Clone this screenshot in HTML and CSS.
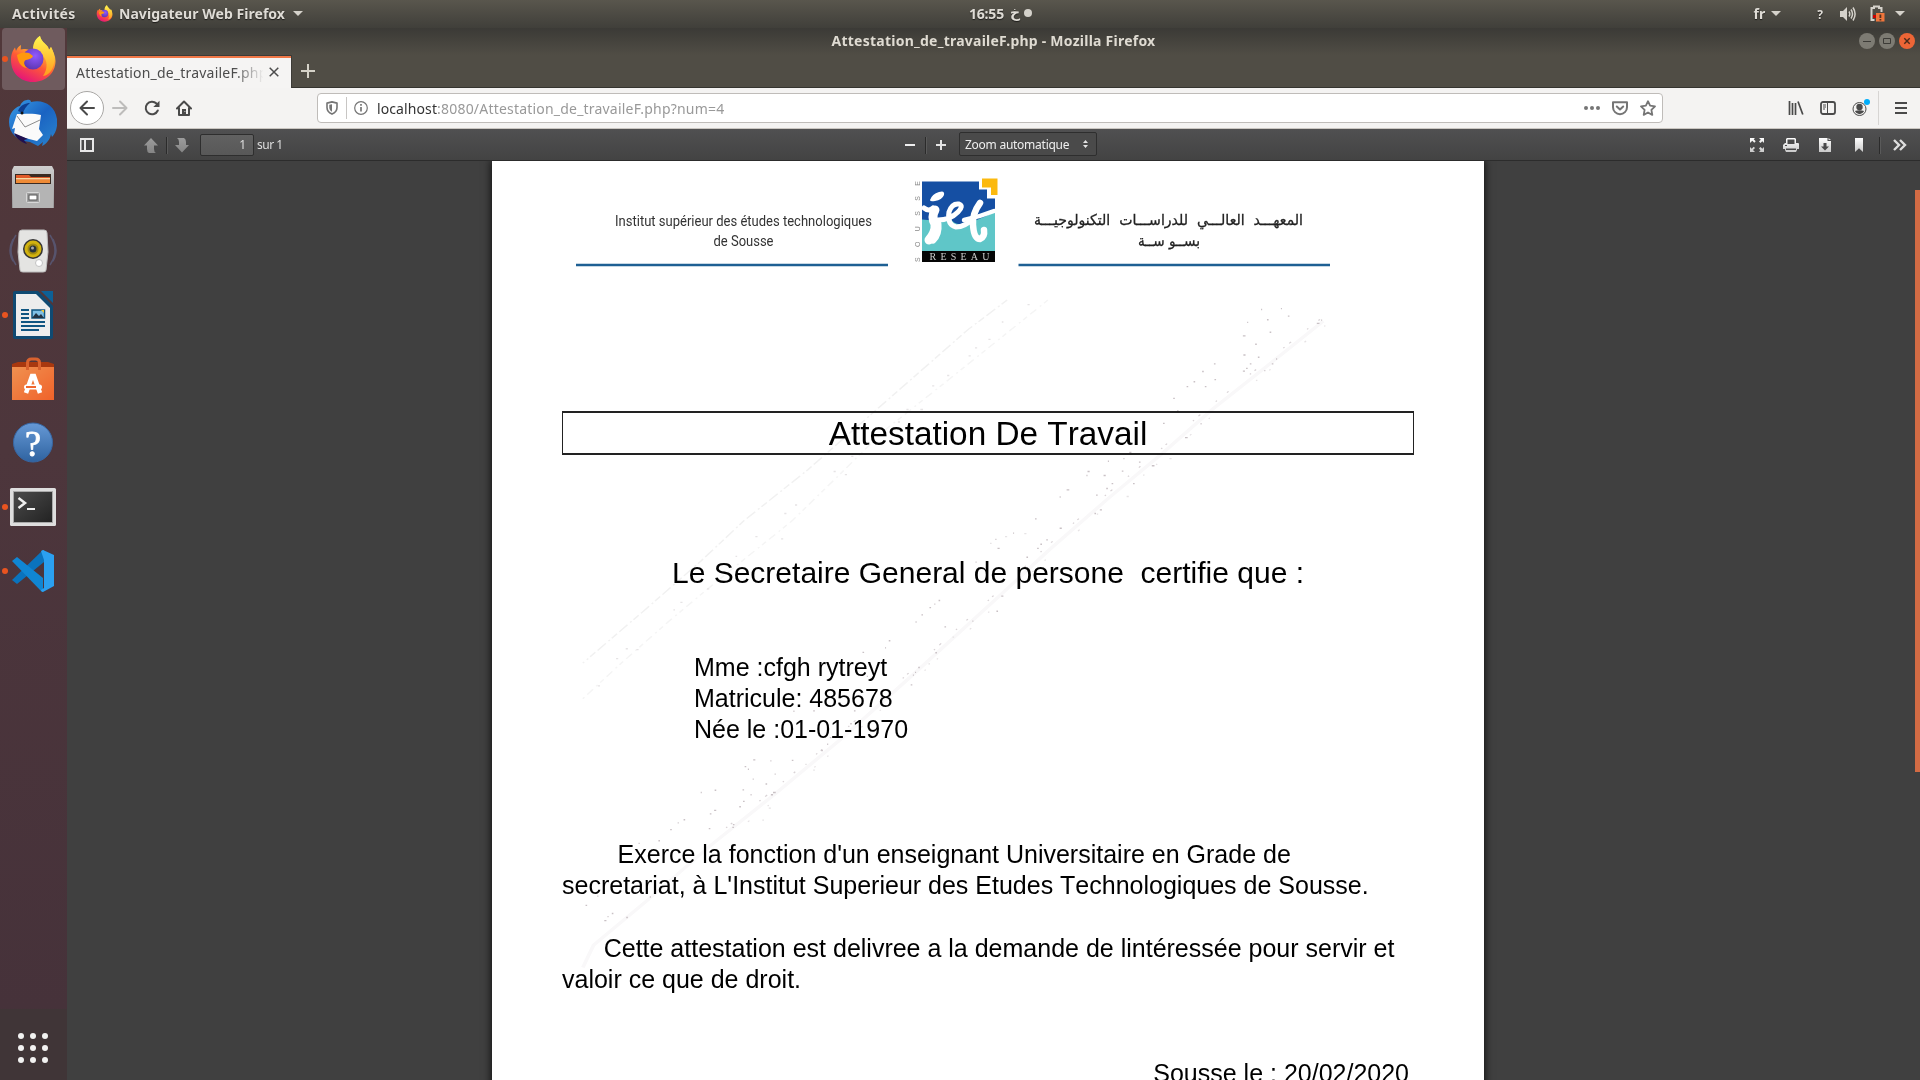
FILE: index.html
```html
<!DOCTYPE html>
<html lang="fr">
<head>
<meta charset="utf-8">
<title>Attestation_de_travaileF.php - Mozilla Firefox</title>
<link rel="stylesheet" href="styles.css">
</head>
<body>
<svg width="0" height="0" class="defs">
  <defs>
    <linearGradient id="fxBody" x1="0.8" y1="0" x2="0.3" y2="1"><stop offset="0" stop-color="#fff44f"/><stop offset=".35" stop-color="#ffb02e"/><stop offset=".6" stop-color="#ff5a36"/><stop offset="1" stop-color="#e3127c"/></linearGradient>
    <linearGradient id="fxTail" x1="0" y1="0" x2="0" y2="1"><stop offset="0" stop-color="#fff64f"/><stop offset="1" stop-color="#ff9a1f"/></linearGradient>
    <radialGradient id="fxGlobe" cx=".6" cy=".35" r=".7"><stop offset="0" stop-color="#9059ff"/><stop offset="1" stop-color="#5b35ae"/></radialGradient>
    <linearGradient id="tbBird" x1="0" y1="0" x2="1" y2="1"><stop offset="0" stop-color="#3a9fe8"/><stop offset=".5" stop-color="#1a63c2"/><stop offset="1" stop-color="#2b86cf"/></linearGradient>
    <linearGradient id="steel" x1="0" y1="0" x2="0" y2="1"><stop offset="0" stop-color="#cfcfcf"/><stop offset="1" stop-color="#989898"/></linearGradient>
    <linearGradient id="bag" x1="0" y1="0" x2="1" y2="1"><stop offset="0" stop-color="#f09150"/><stop offset="1" stop-color="#f0622a"/></linearGradient>
    <linearGradient id="help" x1="0" y1="0" x2="0" y2="1"><stop offset="0" stop-color="#6699d6"/><stop offset="1" stop-color="#2f63a0"/></linearGradient>
    <linearGradient id="screen" x1="0" y1="0" x2="1" y2="1"><stop offset="0" stop-color="#4b4b4b"/><stop offset="1" stop-color="#222"/></linearGradient>
    <linearGradient id="light" x1="0" y1="0" x2="0" y2="1"><stop offset="0" stop-color="#fff"/><stop offset="1" stop-color="#c9c9c9"/></linearGradient>
    <linearGradient id="mid" x1="0" y1="0" x2="0" y2="1"><stop offset="0" stop-color="#9c9c9c"/><stop offset="1" stop-color="#858585"/></linearGradient>
    <symbol id="firefox" viewBox="0 0 48 48">
      <path fill="url(#fxBody)" d="M24 47C11 47 2 37.500 2 25c0-6 2-10 4-12.500L7 16c1-3 3-5 5-6l-.3 4.500C14 13.500 18 14 20 15l6-1C24 7 29 2 31 1c1 5 4 7 8 11l1 3 2-3c2 4 4.500 9 4.500 14C46.500 38 37 47 24 47z"/>
      <path fill="url(#fxTail)" d="M31 1c1 5 5 7 8 11l1 3 2-3c3 6 5 12 2 20-2 6-7 9-10 9 5-7 5-16-1-21-3-3-7-4-9-6 0-6 3-11 7-13z"/>
      <circle cx="24" cy="24" r="10.500" fill="url(#fxGlobe)"/>
      <path fill="#ff980e" d="M8 20c4-3 9-3 12-2l4 3c-1 3-4 3-7 4-3 1-2 6 1 8-7-1-9-7-10-13z"/>
    </symbol>
  </defs>
</svg>

<header class="topbar">
  <div class="top-left">
    <span class="t-act">Activités</span>
    <svg class="fx-mini"><use href="#firefox"/></svg>
    <span class="t-app">Navigateur Web Firefox</span>
    <i class="caret"></i>
  </div>
  <div class="clock"><span class="time">16:55</span><span class="day">خ</span><i class="dot"></i></div>
  <div class="top-right">
    <span class="t-lang">fr</span><i class="caret"></i>
    <span class="t-q">?</span>
    <svg class="vol" width="16" height="16" viewBox="0 0 16 16"><path fill="#d5d2cb" d="M0 5h3l4-4v14l-4-4H0z"/><path fill="none" stroke="#d5d2cb" stroke-width="1.500" d="M9 5.500q1.600 2.500 0 5M11 3.500q3 4.500 0 9M13 1.500q4.200 6.500 0 13"/></svg>
    <svg class="bat" width="15" height="17" viewBox="0 0 15 17"><path fill="none" stroke="#d5d2cb" stroke-width="2" d="M4.500 15H1.500V3H4V1.500h5V3h2.500v4"/><path fill="#c00" d="M3 10h3v3H3z"/><path fill="#f0763c" d="M6 8h8.500v8.500H6z"/><path fill="#54301c" d="M9.500 9.500h1.800v3.500H9.500zM9.500 14h1.800v1.500H9.500z"/></svg>
    <i class="caret"></i>
  </div>
</header>

<div class="desktop">
  <nav class="dock">
    <div class="app active running"><svg width="48" height="48"><use href="#firefox"/></svg></div>
    <div class="app"><svg width="48" height="48" viewBox="0 0 48 48">
      <path fill="url(#tbBird)" d="M18 1c3-1 4 1 4 2 12-3 24 3 26 17 1 9-2 15-5 18l-1-3c-1 6-5 10-9 12l1-4-5 4-8-4C8 42 0 34 0 23 0 14 6 8 11 7c1-3 4-6 7-6z"/>
      <path fill="#0f3f91" d="M9 12c2-6 8-8 12-8-4 3-6 7-7 10z"/>
      <path fill="#fafafa" d="M8 15c7 0 17-1 24 1l-2 14 4 6-6 6C20 40 12 38 5 35l1-6-3 1z"/>
      <path fill="none" stroke="#8c8c8c" d="M8 17l8 11 15-7"/>
      <path fill="#20104f" d="M5 34l14 6-4 1 3 4c-6-2-11-6-13-11z"/><circle cx="13" cy="14" r="1.500" fill="#111"/>
    </svg></div>
    <div class="app"><svg width="48" height="48" viewBox="0 0 48 48">
      <path fill="url(#steel)" d="M5 3h38l2 4v38H3V7z"/><path fill="#3a2a22" d="M6 11h36v10H6z"/><path fill="#e05a2a" d="M7 12h13l2 2h19v6H7z"/><path fill="#f5d9a0" d="M7 15h34v1.500H7z"/><path fill="#ee8a35" d="M7 17h34v3H7z"/>
      <path fill="#b4b4b4" d="M4 21h40v24H4z"/><rect x="17.500" y="29.500" width="13" height="10" rx="1" fill="#a0a0a0" stroke="#d8d8d8"/><rect x="20" y="32" width="8" height="5" fill="#fff" stroke="#555"/>
    </svg></div>
    <div class="app"><svg width="48" height="48" viewBox="0 0 48 48">
      <path fill="none" stroke="#5d688f" stroke-width="1.500" opacity=".6" d="M7 8q-10 16 0 30M4 12q-6 12 0 22M41 8q10 16 0 30M44 12q6 12 0 22"/>
      <path fill="#e4e4e2" stroke="#bdbdbd" d="M13 3h22q3 0 3 3l1 19-2 18q0 2-3 2H14q-3 0-3-2L9 25l1-19q0-3 3-3z"/>
      <circle cx="24" cy="22" r="10" fill="#353535"/><circle cx="24" cy="22" r="8.500" fill="#d1b20f"/><circle cx="24" cy="22" r="5.500" fill="#a18a10"/><circle cx="24" cy="22" r="3.500" fill="#27323b"/><circle cx="23.500" cy="21" r="1.500" fill="#aaa"/><circle cx="30" cy="36" r="3.500" fill="#fff" stroke="#c2c2c2"/>
    </svg></div>
    <div class="app running"><svg width="48" height="48" viewBox="0 0 48 48">
      <path fill="#0f4a72" d="M6 0h23l15 15v31q0 2-2 2H6q-2 0-2-2V2q0-2 2-2z"/><path fill="#0d6096" d="M32 0h12v12z"/><path fill="#ededed" d="M7 3h20l14 14v28H7z"/>
      <path stroke="#105581" stroke-width="2" d="M12 19h8M12 23h8M12 27h8M12 31h24M12 35h24M12 39h18"/><path fill="#7fc0e6" stroke="#105581" stroke-width="1.500" d="M23 19h12.500v8H23z"/><path fill="#234" d="M23 27l4-5 3 3 2-2 3 4z"/><path fill="#f3c530" d="M32 19h3v3z"/>
    </svg></div>
    <div class="app"><svg width="48" height="48" viewBox="0 0 48 48">
      <path fill="#a8380f" d="M3 9l6-2h30l6 2v5H3z"/><path fill="url(#bag)" d="M3 12h42v33H3z"/><path fill="none" stroke="#d9622f" stroke-width="3" d="M18.500 15V8q0-4 4-4h4q4 0 4 4v7"/>
      <path fill="none" stroke="#fff" stroke-width="4.500" d="M17 38l6-17h2l6 17"/><path stroke="#fff" stroke-width="5" stroke-linecap="round" d="M17.500 32h13"/><path stroke="#f0672e" stroke-width="2" d="M17 32h10"/>
    </svg></div>
    <div class="app"><svg width="48" height="48" viewBox="0 0 48 48"><circle cx="24" cy="23.500" r="19.500" fill="url(#help)" stroke="#3767a4"/><text x="24" y="37" text-anchor="middle" class="qmark">?</text></svg></div>
    <div class="app running"><svg width="48" height="48" viewBox="0 0 48 48"><rect x="1" y="5" width="46" height="38" rx="1.500" fill="#dedede"/><rect x="4.500" y="8.500" width="39" height="31" fill="url(#screen)" stroke="#a9a9a9"/><path fill="none" stroke="#eee" stroke-width="2.500" d="M9.500 15l6.500 5-6.500 5"/><path stroke="#eee" stroke-width="2" d="M18 26h8"/></svg></div>
    <div class="app running"><svg width="48" height="48" viewBox="0 0 48 48"><path fill="#0a73bd" d="M3 33l5 4 27-22V3l-1 0z"/><path fill="#1086d3" d="M3 14l5-4 26 21v14l-2-1z"/><path fill="#2ba0f0" d="M34 3l11 5v31l-11 6c-1 0-2-1-2-2l3-2V13l-3-9z"/></svg></div>
    <svg class="grid" width="32" height="32" viewBox="0 0 32 32" fill="#f2f2f1"><circle cx="4" cy="4" r="3"/><circle cx="16" cy="4" r="3"/><circle cx="28" cy="4" r="3"/><circle cx="4" cy="16" r="3"/><circle cx="16" cy="16" r="3"/><circle cx="28" cy="16" r="3"/><circle cx="4" cy="28" r="3"/><circle cx="16" cy="28" r="3"/><circle cx="28" cy="28" r="3"/></svg>
  </nav>

  <main class="window">
    <div class="titlebar">
      <span class="win-title">Attestation_de_travaileF.php - Mozilla Firefox</span>
      <div class="controls">
        <svg width="16" height="16" viewBox="0 0 16 16"><circle cx="8" cy="8" r="8" fill="#7d7b73"/><path stroke="#3c3b37" d="M4 8.500h8"/></svg>
        <svg width="16" height="16" viewBox="0 0 16 16"><circle cx="8" cy="8" r="8" fill="#7d7b73"/><path fill="none" stroke="#3c3b37" d="M4.500 5.500h7v5h-7z"/></svg>
        <svg width="16" height="16" viewBox="0 0 16 16"><circle cx="8" cy="8" r="8" fill="#ed6536"/><path stroke="#4a2a1a" stroke-width="1.400" d="M5.300 5.300l5.400 5.400M10.700 5.300l-5.400 5.400"/></svg>
      </div>
    </div>
    <div class="tabs">
      <div class="tab"><span class="tab-title">Attestation_de_travaileF.php</span><svg width="10" height="10" viewBox="0 0 10 10"><path stroke="#4c4c4c" stroke-width="1.500" d="M.7.7l8.600 8.600M9.300.7L.7 9.300"/></svg></div>
      <svg class="newtab" width="14" height="14" viewBox="0 0 14 14"><path stroke="#d5d2c8" stroke-width="2" d="M7 0v14M0 7h14"/></svg>
    </div>
    <div class="navbar">
      <div class="back"><svg width="16" height="16" viewBox="0 0 16 16"><path fill="none" stroke="#4a4a4a" stroke-width="2" stroke-linecap="round" stroke-linejoin="round" d="M8 1.500L1.500 8 8 14.500M2 8h13"/></svg></div>
      <div class="navicons">
        <svg width="16" height="16" viewBox="0 0 16 16"><path fill="none" stroke="#bdbcbb" stroke-width="2" stroke-linecap="round" stroke-linejoin="round" d="M8 1.500L14.500 8 8 14.500M14 8H1"/></svg>
        <svg width="16" height="16" viewBox="0 0 16 16"><path fill="none" stroke="#4a4a4a" stroke-width="2" stroke-linecap="round" d="M13.800 10.500A6.300 6.300 0 1 1 12.500 3.500"/><path fill="#4a4a4a" d="M15.500.8V7H9.300z"/></svg>
        <svg width="16" height="16" viewBox="0 0 16 16"><path fill="none" stroke="#4a4a4a" stroke-width="2" stroke-linejoin="round" stroke-linecap="round" d="M1 8.500L8 1.500l7 7M3 8v7h10V8"/><path fill="#4a4a4a" d="M6 9h4v5H6z"/><path fill="#eee" d="M8.500 11h.8v1h-.8z"/></svg>
      </div>
      <div class="urlbar">
        <svg width="12" height="14" viewBox="0 0 12 14"><path fill="none" stroke="#757575" stroke-width="1.600" stroke-linejoin="round" d="M6 .9l5 1.200v4.400c0 3-2 5.300-5 6.600-3-1.300-5-3.600-5-6.600V2.100z"/><path fill="#757575" d="M6 3.200v7.600C4.300 9.700 3.300 8.300 3.300 6.500V3.800z"/></svg>
        <i class="ubsep"></i>
        <svg width="14" height="14" viewBox="0 0 14 14"><circle cx="7" cy="7" r="6.300" fill="none" stroke="#757575" stroke-width="1.200"/><path stroke="#757575" stroke-width="1.700" d="M7 6v4.500M7 3v1.700"/></svg>
        <span class="url"><b>localhost</b>:8080/Attestation_de_travaileF.php?num=4</span>
        <div class="ubicons">
          <svg width="16" height="16" viewBox="0 0 16 16" fill="#757575"><circle cx="2" cy="8" r="2"/><circle cx="8" cy="8" r="2"/><circle cx="14" cy="8" r="2"/></svg>
          <svg width="16" height="16" viewBox="0 0 16 16"><path fill="none" stroke="#757575" stroke-width="2" stroke-linejoin="round" d="M1 2.200h14v5a7 7 0 0 1-14 0z"/><path fill="none" stroke="#757575" stroke-width="2" stroke-linecap="round" stroke-linejoin="round" d="M4.800 6.500L8 9.500l3.200-3"/></svg>
          <svg width="16" height="16" viewBox="0 0 16 16"><path fill="none" stroke="#757575" stroke-width="1.800" stroke-linejoin="round" d="M8 1.200l2.100 4.500 4.900.7-3.600 3.500.9 5L8 12.500l-4.300 2.400.9-5L1 6.400l4.900-.7z"/></svg>
        </div>
      </div>
      <div class="rightnav">
        <svg width="16" height="16" viewBox="0 0 16 16"><path stroke="#4a4a4a" stroke-width="1.700" d="M1.500 1v14M4.500 3v12M7.500 3v12M10 1.500l4.800 13"/></svg>
        <svg width="16" height="16" viewBox="0 0 16 16"><rect x="1" y="2" width="14" height="12" rx="2" fill="none" stroke="#4a4a4a" stroke-width="1.800"/><path stroke="#4a4a4a" d="M7.500 2v12M3 5h3M3 7h3M3 9h2"/></svg>
        <svg width="18" height="18" viewBox="0 0 18 18"><circle cx="7.500" cy="10" r="6.500" fill="none" stroke="#4a4a4a"/><circle cx="7.500" cy="8" r="3.200" fill="#4a4a4a"/><path fill="#4a4a4a" d="M2.800 12q4.700-1.500 9.400 0-1.500 3-4.700 3.300Q4.300 15 2.800 12z"/><circle cx="15" cy="3" r="3" fill="#00adfa"/></svg>
        <i class="navsep"></i>
        <svg class="menu" width="12" height="12" viewBox="0 0 12 12"><path stroke="#4a4a4a" stroke-width="2" d="M0 1h12M0 6h12M0 11h12"/></svg>
      </div>
    </div>

    <div class="pdfbar">
      <div class="pdf-left">
        <svg class="side" width="14" height="14" viewBox="0 0 14 14"><path fill="#e8e8e8" fill-rule="evenodd" d="M0 0h14v14H0zM1.500 2v10H4V2zM6 2v10h6V2z"/></svg>
        <svg class="up" width="14" height="15" viewBox="0 0 14 15"><path fill="url(#mid)" d="M7 0l7 7.500H10V11q0 3 2 4H5q-2-1-2-4V7.500H0z"/></svg>
        <i class="psep"></i>
        <svg width="14" height="15" viewBox="0 0 14 15"><path fill="url(#mid)" d="M7 14.500L0 7h4V4q0-3-2-4h7q2 1 2 4v3h3z"/></svg>
        <span class="pageno">1</span><span class="of">sur 1</span>
      </div>
      <div class="pdf-mid">
        <svg width="10" height="10" viewBox="0 0 10 10"><path stroke="#eee" stroke-width="2" d="M0 5h10"/></svg>
        <i class="psep"></i>
        <svg width="10" height="10" viewBox="0 0 10 10"><path stroke="#e4e4e4" stroke-width="2" d="M0 5h10M5 0v10"/></svg>
        <div class="select"><span>Zoom automatique</span><svg width="5" height="8" viewBox="0 0 5 8"><path fill="#e4e4e4" d="M2.500 0L5 3H0zM2.500 8L5 5H0z"/></svg></div>
      </div>
      <div class="pdf-right">
        <svg width="14" height="14" viewBox="0 0 14 14"><path fill="url(#light)" d="M0 0h5L3.700 1.300l2 2-1.400 1.400-2-2L0 5zM14 0v5l-1.700-1.700-1.800 1.800L9 3.600l1.800-1.800L9 0zM0 14V9l1.700 1.700 2-2L5 10.100l-2 2L5 14zM14 14H9l1.500-1.700L9 10.500 10.500 9l1.800 1.800L14 9z"/></svg>
        <svg width="16" height="14" viewBox="0 0 16 14"><path fill="url(#light)" fill-rule="evenodd" d="M4 0h8l1 1v4h2q1 0 1 1v4.500q0 .5-.5.500H14v1l-1 2H3l-1-2v-1H.5Q0 11 0 10.500V7l2-2h1V1zM4.500 1.500V6h7V1.500zM3 10.500h10V12H3zM2 7v1h2V7z"/></svg>
        <svg width="12" height="14" viewBox="0 0 12 14"><path fill="url(#light)" fill-rule="evenodd" d="M0 0h8.500v3H12v11H0zM4.500 5v3.500H2l4 4 4-4H7.500V5z"/><path fill="#ddd" d="M9.500 0L12 2H9.500z"/></svg>
        <svg width="8" height="14" viewBox="0 0 8 14"><path fill="url(#light)" d="M0 0h8v14L4 10.300 0 14z"/></svg>
        <i class="psep"></i>
        <svg width="14" height="12" viewBox="0 0 14 12"><path fill="none" stroke="#dedede" stroke-width="2.400" d="M1 1l5 5-5 5M7 1l5 5-5 5"/></svg>
      </div>
    </div>

    <section class="viewer">
      <article class="page">
        <svg class="letterhead" width="780" height="100" viewBox="560 170 780 100">
          <g class="lh-fr"><text x="615" y="226" textLength="257" lengthAdjust="spacingAndGlyphs">Institut supérieur des études technologiques</text><text x="713.500" y="245.500" textLength="60" lengthAdjust="spacingAndGlyphs">de Sousse</text></g>
          <path stroke="#1e6094" stroke-width="2.400" d="M576 265h312M1018.500 265H1330"/>
          <text class="lh-side" transform="translate(919.500 262) rotate(-90)" textLength="81">SOUSSE</text>
          <path fill="#5fc6c8" d="M922 205h73v47h-73z"/>
          <path fill="#154fa3" d="M922 181.500h57v8h8v9h8v13l-10 5-12 5-14 3-14-3-23-2z"/>
          <path fill="#5fc6c8" d="M942 222q6-3 9-3 3 6 11 5l10-3-1 12-30 5z"/>
          <path fill="#fbb90f" d="M982 178.500h15.500v16.500H991v-7.500h-9z"/>
          <path fill="#050505" d="M922 251h73v11h-73z"/>
          <path fill="#fff" d="M930 200q2-6 9-8 6-2 5 3-2 5-9 6-5 1-5-1z"/>
          <g fill="none" stroke="#fff" stroke-linecap="round" stroke-linejoin="round">
            <path stroke-width="5" d="M924 208q5 4 9 0"/>
            <path stroke-width="9" d="M935 210q-4 7 0 14 1 8-6 16"/>
            <path stroke-width="7" d="M933 240q6-6 5-16"/>
            <path stroke-width="5" d="M938 220q12 0 20-8 6-6 1-8-7-1-10 8-2 13 7 15 9 0 18-9"/>
            <path stroke-width="6.500" d="M980 203q-8 11-7 22 1 14 7 14 5-2 4-9"/>
            <path stroke-width="4.500" d="M964 220q15-3 30-9"/>
          </g>
          <text class="lh-reseau" x="929.500" y="260" textLength="60">RESEAU</text>
          <g class="lh-ar" direction="rtl"><text x="1303" y="225" textLength="269" lengthAdjust="spacingAndGlyphs">المعهـــد&#160; العالـــي&#160; للدراســـات&#160; التكنولوجيـــة</text><text x="1200" y="245.500" textLength="62" lengthAdjust="spacingAndGlyphs">بســو ســة</text></g>
        </svg>
        <h1>Attestation De Travail</h1>
        <p class="intro">Le Secretaire General de persone  certifie que :</p>
        <p class="ident">Mme :cfgh rytreyt
Matricule: 485678
Née le :01-01-1970</p>
        <p class="body first">        Exerce la fonction d'un enseignant Universitaire en Grade de
secretariat, à L'Institut Superieur des Etudes Technologiques de Sousse.</p>
        <p class="body second">      Cette attestation est delivree a la demande de lintéressée pour servir et
valoir ce que de droit.</p>
        <p class="date">Sousse le : 20/02/2020</p>
        <svg class="scratches" width="840" height="700" viewBox="0 0 1568 1568" preserveAspectRatio="none" fill="none">
          <path stroke="#f9f8f9" stroke-width="7" d="M1462 92L1360 190 1255 290 1160 390 1060 490 950 605 860 705 700 880 560 1030 440 1150 320 1265 200 1390 100 1490 80 1540"/>
          <path stroke="#d9d3d6" stroke-width="2.500" stroke-dasharray="4 26 3 41 5 12 3 70 4 9 3 55" d="M1456 88L1354 184 1249 284 1154 384 1054 484 944 599 854 699 694 874 554 1024 434 1144 314 1259"/>
          <path stroke="#e6e2e4" stroke-width="2.500" stroke-dasharray="3 47 4 88 3 31 3 120" d="M1466 102L1364 200 1259 300 1164 400 1064 500 954 615 864 715 704 890 564 1040 444 1160 324 1275"/>
          <path stroke="#f1f1f1" stroke-width="3" stroke-dasharray="14 5 4 7 22 6" d="M872 45L800 110 700 215 600 320 500 425 380 540 300 630 190 745 80 858"/>
          <path stroke="#f5f5f5" stroke-width="3" stroke-dasharray="10 7 4 9 16 8" d="M948 45L860 130 740 245 640 340 560 435 470 540 330 675 240 765 150 860 80 938"/>
          <path stroke="#c9c1c5" stroke-width="3" d="M1346 66h2M1383 64h2M1396 81h3M1320 95h2M1357 89h3M1362 117h3M1312 125h5M1335 144h3M1313 168h4M1340 173h3M1325 188h3M1318 198h3M1312 204h4M1374 177h2M1366 188h3M1352 203h2M1450 97h5M1458 90h2M1258 188h3M1236 205h3M1259 223h3M1220 228h3M1207 239h3M1241 239h3M1182 265h3M1189 293h3M1163 321h3M1233 322h2M1204 353h5M1100 386h4M1089 400h2M1118 408h3M1142 416h5M1060 406h2M1022 429h4M1052 438h4M1086 428h3M1020 438h2M1067 456h3M1057 467h3M1107 456h3M983 470h5M970 486h2M1038 482h3M1045 515h4M1035 523h3M924 535h3M970 556h4M883 567h2M850 581h2M945 582h3M934 592h3M928 601h3M854 601h4M908 621h3M813 632h2M861 708h4M744 718h3M736 726h2M727 734h3M712 750h3M755 777h3M807 764h2M701 766h2M852 742h3M651 808h3M644 824h2M602 834h3M738 835h3M706 868h3M700 879h2M696 885h2M610 888h2M692 907h3M586 965h3M510 965h3M473 966h2M579 994h3M555 990h2M541 1025h3M536 1040h2M525 1054h3M398 1075h4M430 1077h2M470 1076h3M382 1090h3M388 1096h2M438 1107h2M397 1118h2M421 1129h3M435 1148h5M431 1153h4M326 1143h3M300 1148h2M378 1142h3M393 1153h2M379 1168h3M325 1188h4M317 1196h3M315 1229h3M372 1180h3M360 1220h3M359 1226h3M268 1209h3M257 1216h2M243 1231h3M184 1262h2M221 1256h3M206 1281h3M134 1419h3M126 1426h2M120 1435h4M161 1428h3M205 1382h2M85 1401h3M107 1380h2"/>
          <path stroke="#e6e4e5" stroke-width="3" d="M910 55h4M862 94h3M837 133h4M812 152h4M800 170h4M760 214h4M732 237h4M710 290h5M684 290h4M668 318h4M620 345h3M581 395h4M548 429h4M569 436h4M476 504h4M456 523h4M402 575h4M450 580h4M365 619h3M312 692h4M262 722h4M249 739h3M180 828h4M160 826h4M142 848h4M108 909h4M840 590h3M868 575h4M904 568h4M1095 485h4M1175 400h4M1160 390h3M725 860h3M770 800h3M495 1085h3M510 1098h3M415 1210h3M427 1183h4"/>
        </svg>
      </article>
      <i class="scrollthumb"></i>
    </section>
  </main>
</div>
</body>
</html>
```
FILE: styles.css
```css
* { box-sizing: border-box; }
body { margin: 0; width: 1920px; height: 1080px; overflow: hidden; background: #404040; font-family: "Noto Sans", "Open Sans", sans-serif; }
svg { display: block; flex: none; }
.defs { position: absolute; }
i { display: block; flex: none; }

/* GNOME top bar */
.topbar { height: 28px; display: grid; grid-template-columns: 1fr auto 1fr; align-items: start; background: linear-gradient(#59564d, #403f3a); color: #dfdcd6; font-size: 14px; font-weight: 700; line-height: 27px; text-shadow: 0 1px 1px rgba(0,0,0,.6); }
.top-left { display: flex; align-items: center; padding-left: 12px; height: 27px; }
.t-act { width: 64px; letter-spacing: .3px; white-space: nowrap; }
.t-app { width: 169px; letter-spacing: .05px; white-space: nowrap; }
.fx-mini { width: 17px; height: 17px; margin: 0 6px 0 20px; }
.caret { border: 5px solid transparent; border-top-color: #d5d2cb; border-bottom: 0; }
.t-app + .caret { margin-left: 5px; }
.clock { display: flex; align-items: center; height: 26px; padding-left: 81px; }
.time { width: 36px; letter-spacing: -.2px; }
.day { margin-left: 5px; font-family: "DejaVu Sans", sans-serif; width: 11px; }
.dot { width: 8px; height: 8px; border-radius: 50%; background: #d5d2cb; margin-left: 3px; }
.top-right { display: flex; align-items: center; justify-content: flex-end; height: 27px; padding-right: 15px; }
.t-lang { margin-right: 6px; }
.t-q { font-size: 12px; margin: 2px 17px 0 36px; }
.vol { margin-right: 14px; }
.bat { margin-right: 10px; }

.desktop { display: flex; height: 1052px; }

/* launcher */
.dock { width: 67px; flex: none; display: flex; flex-direction: column; align-items: center; background: linear-gradient(#51383a, #4d363c 40%, #46323a 93.200%, #403537 93.300%); position: relative; }
.app { width: 63px; height: 62px; margin-bottom: 2px; display: flex; align-items: center; justify-content: center; border-radius: 4px; padding: 0 2px 1px 0; position: relative; }
.active { background: #6f5b5e; }
.running::before { content: ""; position: absolute; left: 0; top: 28px; width: 6px; height: 6px; border-radius: 50%; background: #e95420; }
.qmark { font: 36px "Liberation Serif", serif; fill: #fff; stroke: #fff; stroke-width: .8px; }
.grid { margin: auto 0 16px; padding-right: 0; margin-right: 2px; }

/* browser chrome */
.window { flex: 1; display: flex; flex-direction: column; min-width: 0; }
.titlebar { height: 27px; background: linear-gradient(#3b3a36, #504d45); display: grid; grid-template-columns: 1fr auto 1fr; color: #dfdbd2; font-size: 14px; font-weight: 700; line-height: 25px; }
.win-title { grid-column: 2; letter-spacing: .24px; }
.controls { display: flex; gap: 4px; justify-content: flex-end; padding: 5px 5px 0 0; }
.tabs { height: 33px; background: #504d45; border-bottom: 1px solid #35342f; display: flex; }
.tab { width: 225px; height: 33px; border-top: 1px solid #3c3b37; border-right: 1px solid #3c3b37; background: linear-gradient(#f07746 2px, #f5f4f3 2px); display: flex; align-items: center; padding: 0 12px 0 9px; justify-content: space-between; color: #4c4c4c; font-size: 14px; letter-spacing: .2px; }
.tab-title { width: 187px; overflow: hidden; white-space: nowrap; -webkit-mask-image: linear-gradient(90deg, #000 158px, transparent 188px); mask-image: linear-gradient(90deg, #000 158px, transparent 188px); }
.newtab { margin: 9px 0 0 9px; }
.navbar { height: 41px; background: #f4f3f2; border-bottom: 1px solid #cac6c1; display: flex; align-items: center; padding-left: 3px; }
.back { width: 34px; height: 34px; border: 1px solid #a9a7a5; border-radius: 50%; background: #fff; display: flex; align-items: center; justify-content: center; }
.navicons { display: flex; gap: 16px; margin-left: 8px; width: 205px; }
.urlbar { width: 1346px; height: 30px; border: 1px solid #bfbcb9; border-radius: 4px; background: #fff; display: flex; align-items: center; padding: 0 6px 0 8px; }
.ubsep { width: 1px; height: 22px; background: #c8c6c4; margin: 0 7px 0 8px; }
.url { margin-left: 9px; font-size: 14px; letter-spacing: .2px; color: #999; white-space: nowrap; }
.url b { font-weight: 400; letter-spacing: .1px; color: #333; }
.ubicons { display: flex; gap: 12px; margin-left: auto; }
.rightnav { display: flex; align-items: center; margin-left: 125px; }
.rightnav svg + svg { margin-left: 16px; }
.navsep { width: 1px; height: 34px; background: #d7d5d3; margin-left: 8px; }
.rightnav .menu { margin-left: 16px; }

/* PDF toolbar */
.pdfbar { height: 32px; background: linear-gradient(#505051, #434343); border-bottom: 1px solid #2c2c2c; display: flex; align-items: flex-start; color: #dedede; font-size: 12px; position: relative; }
.pdf-left, .pdf-mid, .pdf-right { display: flex; align-items: center; height: 32px; }
.psep { width: 1px; height: 17px; background: #2b2b2b; box-shadow: 1px 0 #5a5a5a; }
.side { margin: 0 50px 0 13px; }
.up + .psep { margin: 0 8px; }
.pageno { width: 54px; height: 22px; margin: -1px 3px 0 11px; border: 1px solid #2e2e2e; border-radius: 2px; background: linear-gradient(#616161, #585858); text-align: right; padding-right: 7px; line-height: 20px; }
.of { letter-spacing: -.5px; margin-top: -1px; }
.pdf-left { width: 838px; }
.pdf-mid .psep { margin: 0 10px 0 10px; }
.select { margin: -2px 0 0 13px; width: 138px; height: 24px; border: 1px solid #2e2e2e; border-radius: 2px; background: #4a4a4a; display: flex; align-items: center; justify-content: space-between; padding: 0 8px 0 5px; color: #eee; letter-spacing: -.26px; }
.pdf-right { margin-left: auto; padding-right: 13px; }
.pdf-right svg { margin-left: 20px; }
.pdf-right svg:nth-child(2) { margin-left: 19px; }
.pdf-right svg:nth-child(4) { margin-left: 24px; }
.pdf-right .psep { margin-left: 16px; }
.pdf-right svg:last-child { margin-left: 13px; }

/* document */
.viewer { flex: 1; background: #404040; position: relative; overflow: hidden; display: flex; padding-left: 425px; }
.page { position: relative; width: 992px; height: 1403px; flex: none; background: #fff; box-shadow: 0 0 8px 1px rgba(0,0,0,.75); color: #000; font-family: "Liberation Sans", Arial, sans-serif; font-kerning: none; padding: 9px 70px 0 70px; }
.letterhead { margin-left: -2px; }
.lh-fr { font: 15.500px Roboto, sans-serif; fill: #333; }
.lh-ar { font: 15px "DejaVu Sans", sans-serif; fill: #222; stroke: #222; stroke-width: .3px; }
.lh-side { font: 7px "Liberation Sans", sans-serif; fill: #888; }
.lh-reseau { font: 10px "Liberation Serif", serif; fill: #ccc; }
.page h1 { margin: 141px 0 0; height: 44px; border: 1px solid #222; border-width: 2px 1px; font-size: 33.333px; font-weight: 400; line-height: 41px; text-align: center; }
.page p { margin: 0; white-space: pre; }
.page .intro { margin-top: 100px; font-size: 30px; line-height: 36px; text-align: center; }
.page .ident { padding-left: 132px; margin-top: 61px; font-size: 25px; line-height: 31px; }
.page .body { font-size: 25px; line-height: 31px; margin-top: 94px; }
.page .second { margin-top: 32px; }
.page .date { font-size: 25px; line-height: 31px; text-align: right; padding-right: 5px; margin-top: 63px; }
.scratches { position: absolute; left: 48px; top: 119px; mix-blend-mode: multiply; }
.scrollthumb { position: absolute; right: 0; top: 29px; width: 5px; height: 582px; background: #d36b44; }
```
